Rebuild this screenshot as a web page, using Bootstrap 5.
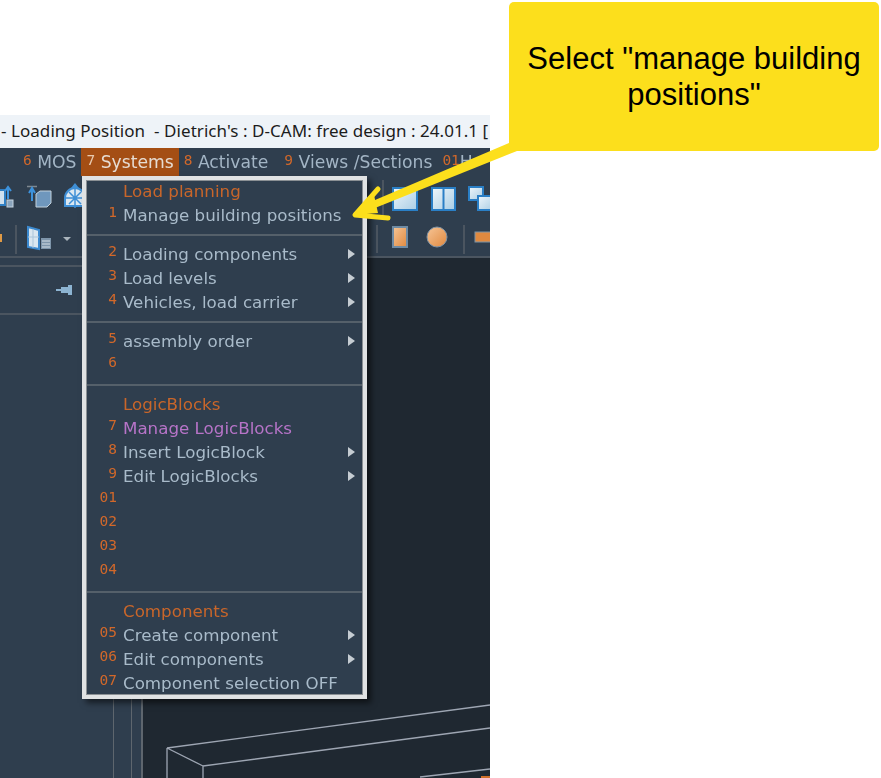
<!DOCTYPE html>
<html lang="en">
<head>
    <meta charset="UTF-8">
    <meta name="viewport" content="width=device-width, initial-scale=1.0">
    <link href="https://cdn.jsdelivr.net/npm/bootstrap@5.3.0/dist/css/bootstrap.min.css" rel="stylesheet">
    <script src="https://cdn.jsdelivr.net/npm/bootstrap@5.3.0/dist/js/bootstrap.bundle.min.js"></script>
    <title>Select manage building positions</title>
    <style>
        html, body { height: 100%; }
        body { background: #fff; overflow: hidden; position: relative; }
        .app-shot { width: 490px; height: 778px; padding-top: 115px; overflow: hidden; position: relative; }
        .title-strip { height: 33px; background: #eef3f8; color: #1c1c1c; font: 17px/31px "Noto Sans", sans-serif; white-space: pre; overflow: hidden; padding-left: 1px; letter-spacing: .05px; }
        .app-body { flex: 1; min-height: 0; background: #2f3e4e; }
        .menu-strip { height: 28px; font: 17.2px/28px "DejaVu Sans", sans-serif; color: #a3b5c5; white-space: nowrap; padding-left: 18px; filter: blur(.4px); }
        .menu-strip .nav-link { color: inherit; padding: 0 5px; }
        .menu-strip .nav-link.is-open { background: #a44e14; color: #e6dcd2; }
        .menu-strip .nav-link:nth-child(4) { margin-left: 6px; }
        .hot-num { font: 14.5px/1 "DejaVu Sans Mono", monospace; color: #d2682a; vertical-align: 3px; }
        .is-open .hot-num { color: #e8c9ad; }
        .tool-row { height: 48px; padding-top: 4px; }
        .tool-row.second { height: 34px; padding-top: 1px; border-bottom: 2px solid #4b5560; }
        .tool-row .rule { width: 2px; background: #4b5560; align-self: stretch; margin-bottom: 8px; }
        .tool-row.second .rule { margin-bottom: 3px; }
        .work-area { flex: 1; min-height: 0; }
        .side-panel { width: 143px; flex: none; }
        .pin-head { height: 50px; margin-top: 7px; border-top: 2px solid #4b5560; border-bottom: 2px solid #4b5560; padding-left: 56px; width: 90px; }
        .side-body { flex: 1; }
        .side-line { width: 1px; background: #5e666e; }
        .side-line.wide { width: 2px; }
        .draw-canvas { flex: 1; background: #1f2831; position: relative; }
        .draw-canvas svg { position: absolute; left: 0; top: 0; }

        .sys-menu.dropdown-menu { position: absolute; display: block; left: 82px; top: 176px; width: 285px; height: 523px; padding: 0; margin: 0; background: #2f3e4e; border: 4px solid #e0e2e3; border-radius: 0; box-shadow: inset 0 0 0 1px #8b9094, 4px 4px 6px rgba(0, 0, 0, .55); font: 16.7px/24px "DejaVu Sans", sans-serif; min-width: 0; }
        .sys-menu li:first-child { margin-top: -1px; }
        .sys-menu .dropdown-item { height: 24px; padding: 0; color: #a9bbca; display: flex; align-items: center; white-space: nowrap; filter: blur(.4px); background: none; }
        .sys-menu .dropdown-item.head { color: #c9662a; }
        .sys-menu .dropdown-item.logic { color: #b774c8; }
        .sys-menu .key-slot { width: 31px; flex: none; text-align: right; margin-right: 6px; }
        .sys-menu .hot-num { vertical-align: 0; position: relative; top: -3px; }
        .sys-menu .sub-arrow { margin-left: auto; margin-right: 8px; width: 0; height: 0; border-left: 7px solid #c5ccd2; border-top: 5px solid transparent; border-bottom: 5px solid transparent; }
        .sys-menu .dropdown-divider { margin: 7px 1px 6px; height: 2px; border: 0; background: #55606a; opacity: 1; }

        .call-out { position: absolute; left: 509px; top: 2px; width: 370px; height: 149px; background: #fcdf1c; border-radius: 5px; color: #000; font: 31px/36px "Liberation Sans", Arial, sans-serif; padding: 0 10px; z-index: 1020; }
        .arrow-over { position: absolute; left: 0; top: 0; pointer-events: none; z-index: 1010; }
    </style>
</head>
<body>

    <div class="app-shot d-flex flex-column">
        <!-- window title -->
        <div class="title-strip">- Loading Position  - Dietrich's : D-CAM: free design : 24.01.1 [</div>

        <div class="app-body d-flex flex-column">
            <!-- menu bar -->
            <nav class="nav flex-nowrap menu-strip">
                <a class="nav-link" href="#"><span class="hot-num">6</span> MOS</a>
                <a class="nav-link is-open" href="#"><span class="hot-num">7</span> Systems</a>
                <a class="nav-link" href="#"><span class="hot-num">8</span> Activate</a>
                <a class="nav-link" href="#"><span class="hot-num">9</span> Views /Sections</a>
                <a class="nav-link" href="#"><span class="hot-num">01</span>H</a>
            </nav>

            <!-- toolbars -->
            <div class="tool-row d-flex">
                <svg width="90" height="34" viewBox="0 180 90 34">
                    <rect x="-4" y="190" width="9" height="15" fill="#cfe0ee" stroke="#2f7fc4" stroke-width="2"/>
                    <path d="M8 199V187M5 191l3-4 3 4" fill="none" stroke="#3d92dc" stroke-width="2"/>
                    <rect x="7" y="200" width="6" height="7" fill="#8aa4bc" stroke="#c5d3df"/>
                    <path d="M27 186.500h10" stroke="#7f8890" stroke-width="1.500"/>
                    <path d="M32 201V188M29 193l3-5 3 5" fill="none" stroke="#3d92dc" stroke-width="2"/>
                    <path d="M36 194l4-3h11v12l-4 4H36z" fill="#6f97bd" stroke="#c3d1dc"/>
                    <path d="M65 206v-8a10 10 0 0 1 20 0v8z" fill="#dbe8f2" stroke="#3f8fd6" stroke-width="2"/>
                    <path d="M65 198h20M75 188v20M69 192l12 12M81 192l-12 12" stroke="#3f8fd6" stroke-width="1.500"/>
                    <path d="M71 188l4-5 4 5z" fill="#3f8fd6"/>
                </svg>
                <div class="flex-grow-1"></div>
                <div class="rule me-2"></div>
                <svg width="98" height="34" viewBox="392 180 98 34">
                    <defs>
                        <linearGradient id="paneBlue" x1="0" y1="0" x2="1" y2="1">
                            <stop offset="0" stop-color="#eef6fb"/>
                            <stop offset="1" stop-color="#a9cde4"/>
                        </linearGradient>
                    </defs>
                    <rect x="393" y="188" width="24" height="22" fill="url(#paneBlue)" stroke="#2a7fc6" stroke-width="2"/>
                    <rect x="432" y="188" width="23" height="22" fill="url(#paneBlue)" stroke="#2a7fc6" stroke-width="2"/>
                    <path d="M443.500 188v22" stroke="#2a7fc6" stroke-width="2"/>
                    <rect x="469" y="187" width="14" height="13" fill="url(#paneBlue)" stroke="#2a7fc6" stroke-width="2"/>
                    <rect x="478" y="196" width="16" height="14" fill="url(#paneBlue)" stroke="#2a7fc6" stroke-width="2"/>
                </svg>
            </div>
            <div class="tool-row second d-flex">
                <svg width="82" height="30" viewBox="0 225 82 30">
                    <rect x="-3" y="234" width="5" height="8" fill="#e09a45"/>
                    <rect x="15" y="225" width="2" height="29" fill="#4b5560"/>
                    <path d="M28 227l11 3v19l-11-2z" fill="#d9e6f0" stroke="#3c8ad0" stroke-width="2"/>
                    <path d="M33 229v19M28 237h11" stroke="#a9c4da"/>
                    <rect x="41" y="238" width="10" height="11" fill="#7e95aa"/>
                    <path d="M42 241h8M42 244h8M42 247h8" stroke="#d4dde5"/>
                    <path d="M63 237h8l-4 4z" fill="#aab4bc"/>
                </svg>
                <div class="flex-grow-1"></div>
                <div class="rule" style="margin-right:14px"></div>
                <svg width="98" height="30" viewBox="392 225 98 30">
                    <defs>
                        <linearGradient id="paneOrange" x1="0" y1="0" x2="1" y2="1">
                            <stop offset="0" stop-color="#f6c596"/>
                            <stop offset="1" stop-color="#e0893f"/>
                        </linearGradient>
                    </defs>
                    <rect x="393" y="227" width="14" height="20" fill="url(#paneOrange)" stroke="#6f8ba4" stroke-width="2"/>
                    <circle cx="437" cy="237" r="10" fill="url(#paneOrange)" stroke="#7f93a6"/>
                    <rect x="463" y="225" width="2" height="29" fill="#4b5560"/>
                    <rect x="475" y="232" width="20" height="10" fill="#e0893f" stroke="#7f93a6"/>
                </svg>
            </div>

            <!-- panel + drawing area -->
            <div class="work-area d-flex">
                <div class="side-panel d-flex flex-column">
                    <div class="pin-head d-flex align-items-center">
                        <svg width="18" height="12" viewBox="0 0 18 12">
                            <path d="M0 5h5V3h7V1h4v10h-4V9H5V7H0z" fill="#8db4d2"/>
                        </svg>
                    </div>
                    <div class="side-body d-flex">
                        <div class="flex-grow-1"></div>
                        <div class="side-line"></div>
                        <div style="width:17px"></div>
                        <div class="side-line"></div>
                        <div style="width:9px"></div>
                        <div class="side-line wide"></div>
                    </div>
                </div>
                <div class="draw-canvas">
                    <svg width="347" height="520" viewBox="143 258 347 520" fill="none" stroke="#9ea6b3" stroke-width="1.300">
                        <path d="M167 748L490 705M203 766L490 728M167 748L203 766M167 748V778M203 766V778M420 777L490 769"/>
                        <rect x="481" y="776" width="9" height="2" fill="#d0702a" stroke="none"/>
                    </svg>
                </div>
            </div>
        </div>
    </div>

    <!-- open Systems menu -->
    <ul class="dropdown-menu sys-menu list-unstyled">
        <li><a class="dropdown-item head" href="#"><span class="key-slot"></span>Load planning</a></li>
        <li><a class="dropdown-item" href="#"><span class="key-slot hot-num">1</span>Manage building positions</a></li>
        <li><hr class="dropdown-divider"></li>
        <li><a class="dropdown-item" href="#"><span class="key-slot hot-num">2</span>Loading components<span class="sub-arrow"></span></a></li>
        <li><a class="dropdown-item" href="#"><span class="key-slot hot-num">3</span>Load levels<span class="sub-arrow"></span></a></li>
        <li><a class="dropdown-item" href="#"><span class="key-slot hot-num">4</span>Vehicles, load carrier<span class="sub-arrow"></span></a></li>
        <li><hr class="dropdown-divider"></li>
        <li><a class="dropdown-item" href="#"><span class="key-slot hot-num">5</span>assembly order<span class="sub-arrow"></span></a></li>
        <li><a class="dropdown-item" href="#"><span class="key-slot hot-num">6</span></a></li>
        <li><hr class="dropdown-divider"></li>
        <li><a class="dropdown-item head" href="#"><span class="key-slot"></span>LogicBlocks</a></li>
        <li><a class="dropdown-item logic" href="#"><span class="key-slot hot-num">7</span>Manage LogicBlocks</a></li>
        <li><a class="dropdown-item" href="#"><span class="key-slot hot-num">8</span>Insert LogicBlock<span class="sub-arrow"></span></a></li>
        <li><a class="dropdown-item" href="#"><span class="key-slot hot-num">9</span>Edit LogicBlocks<span class="sub-arrow"></span></a></li>
        <li><a class="dropdown-item" href="#"><span class="key-slot hot-num">01</span></a></li>
        <li><a class="dropdown-item" href="#"><span class="key-slot hot-num">02</span></a></li>
        <li><a class="dropdown-item" href="#"><span class="key-slot hot-num">03</span></a></li>
        <li><a class="dropdown-item" href="#"><span class="key-slot hot-num">04</span></a></li>
        <li><hr class="dropdown-divider"></li>
        <li><a class="dropdown-item head" href="#"><span class="key-slot"></span>Components</a></li>
        <li><a class="dropdown-item" href="#"><span class="key-slot hot-num">05</span>Create component<span class="sub-arrow"></span></a></li>
        <li><a class="dropdown-item" href="#"><span class="key-slot hot-num">06</span>Edit components<span class="sub-arrow"></span></a></li>
        <li><a class="dropdown-item" href="#"><span class="key-slot hot-num">07</span>Component selection OFF</a></li>
    </ul>

    <!-- yellow callout and its arrow -->
    <svg class="arrow-over" width="881" height="778" viewBox="0 0 881 778">
        <path d="M509 143L517 151L370 210L368 203Z" fill="#fcdf1c"/>
        <path d="M378 189L355 215L388 218" fill="none" stroke="#fcdf1c" stroke-width="5" stroke-linecap="round" stroke-linejoin="round"/>
        <path d="M355 215L374 195L378 213Z" fill="#fcdf1c"/>
    </svg>
    <div class="call-out d-flex align-items-center justify-content-center text-center">Select "manage building<br>positions"</div>

</body>
</html>
